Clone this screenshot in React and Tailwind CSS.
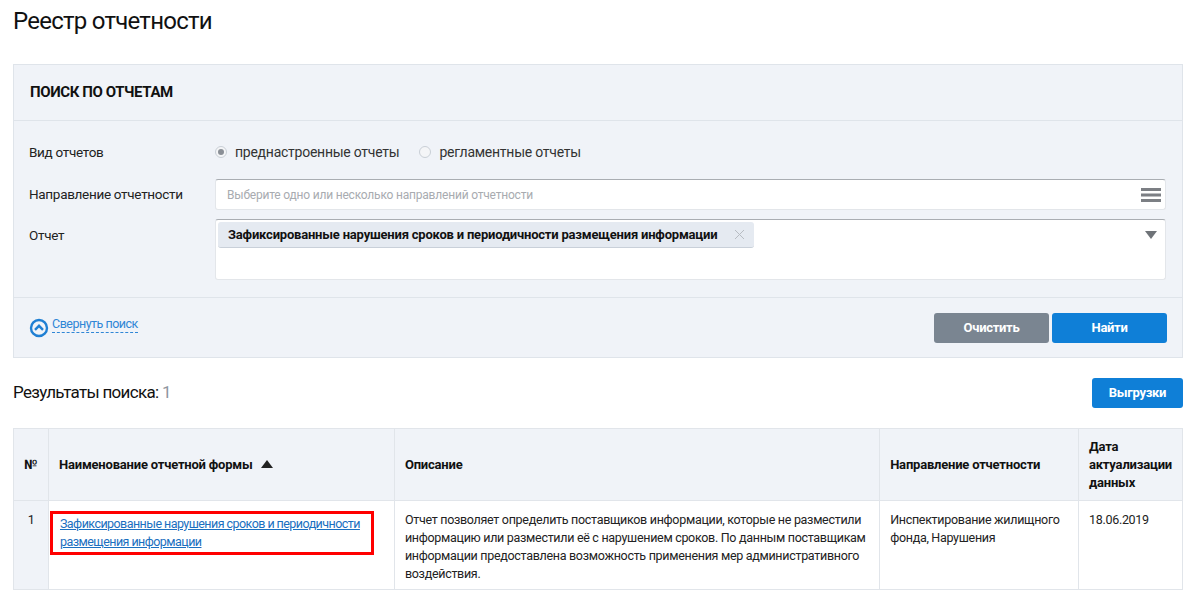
import React from 'react';

const font = { fontFamily: 'Roboto, "Noto Sans", sans-serif' };

const Radio = ({ checked, label }) => (
    <label className="flex items-center gap-[8px] mr-[20px]">
        <span className="w-[12px] h-[12px] rounded-full border border-[#c9cfd6] bg-[#f4f5f7] flex items-center justify-center">
            {checked && <span className="w-[6px] h-[6px] rounded-full bg-[#8a8f96]" />}
        </span>
        <span className="text-[14px] text-[#333] tracking-[-0.25px]">{label}</span>
    </label>
);

const App = () => {
    return (
        <div className="w-[1192px] h-[601px] bg-white overflow-hidden text-[#222]" style={font}>
            <div className="ml-[13px] w-[1170px] pt-[7px]">
                {/* Title */}
                <h1 className="text-[24px] leading-[28px] text-[#111] tracking-[-0.75px]">Реестр отчетности</h1>

                {/* Search panel */}
                <div className="mt-[29px] bg-[#f0f3f8] border border-[#dfe4ea]">
                    <div className="h-[56px] flex items-center px-[16px] border-b border-[#dfe4ea]">
                        <span className="text-[15px] font-bold text-[#111] tracking-[-0.4px]">ПОИСК ПО ОТЧЕТАМ</span>
                    </div>

                    <div className="pl-[15px] pr-[16px] pt-[21px] pb-[17px]">
                        <div className="flex items-center h-[20px]">
                            <span className="w-[186px] text-[13.5px] text-[#222] tracking-[-0.3px]">Вид отчетов</span>
                            <Radio checked label="преднастроенные отчеты" />
                            <Radio label="регламентные отчеты" />
                        </div>

                        <div className="flex items-center mt-[17px]">
                            <span className="w-[186px] text-[13.5px] text-[#222] tracking-[-0.3px]">Направление отчетности</span>
                            <div className="flex-1 h-[31px] bg-white rounded-[3px] border border-[#e3e6ea] border-t-[#a9adb2] flex items-center pl-[11px] pr-[4px]">
                                <span className="flex-1 text-[12px] text-[#a8abb0] tracking-[-0.2px]">Выберите одно или несколько направлений отчетности</span>
                                <svg width="20" height="16" viewBox="0 0 20 16">
                                    <rect x="0" y="1" width="20" height="3" fill="#7c7f84" />
                                    <rect x="0" y="6.5" width="20" height="3" fill="#7c7f84" />
                                    <rect x="0" y="12" width="20" height="3" fill="#7c7f84" />
                                </svg>
                            </div>
                        </div>

                        <div className="flex items-start mt-[9px]">
                            <span className="w-[186px] text-[13.5px] text-[#222] tracking-[-0.3px] pt-[6px]">Отчет</span>
                            <div className="flex-1 h-[61px] bg-white rounded-[3px] border border-[#e3e6ea] border-t-[#a9adb2] flex items-start pl-[2px] pr-[8px] pt-[2px]">
                                <div className="flex-1">
                                    <span className="inline-flex items-center h-[26px] bg-[#e5eaf1] border-b border-[#c9d0d9] rounded-[3px] pl-[10px] pr-[9px]">
                                        <span className="text-[13px] font-bold text-[#111] tracking-[-0.2px]">Зафиксированные нарушения сроков и периодичности размещения информации</span>
                                        <svg className="ml-[17px]" width="11" height="11" viewBox="0 0 11 11">
                                            <path d="M1 1L10 10M10 1L1 10" stroke="#b7bcc2" strokeWidth="1" />
                                        </svg>
                                    </span>
                                </div>
                                <svg className="mt-[9px]" width="12" height="9" viewBox="0 0 12 9">
                                    <path d="M0 0H12L6 8Z" fill="#6f7378" />
                                </svg>
                            </div>
                        </div>
                    </div>

                    <div className="border-t border-[#dfe4ea] h-[60px] flex items-center px-[15px]">
                        <a className="flex items-center gap-[3px] text-[12.5px] text-[#2f86d6] tracking-[-0.5px]">
                            <svg width="20" height="20" viewBox="0 0 20 20">
                                <circle cx="10" cy="10" r="8" fill="none" stroke="#1f7fd3" strokeWidth="2.4" />
                                <path d="M6 11.8L10 7.8L14 11.8" fill="none" stroke="#1f7fd3" strokeWidth="2.4" />
                            </svg>
                            <span className="border-b border-dashed border-[#2f86d6] leading-[15px] pb-[1px] -mt-[6px]">Свернуть поиск</span>
                        </a>
                        <div className="flex-1" />
                        <button className="w-[115px] h-[30px] rounded-[3px] bg-[#7a8591] text-white text-[13px] font-bold tracking-[-0.3px]">Очистить</button>
                        <button className="ml-[3px] w-[115px] h-[30px] rounded-[3px] bg-[#0f7fd7] text-white text-[13px] font-bold tracking-[-0.3px]">Найти</button>
                    </div>
                </div>

                {/* Results header */}
                <div className="flex items-center justify-between mt-[20px] h-[30px]">
                    <span className="text-[17px] text-[#111] tracking-[-0.7px]">Результаты поиска: <span className="text-[#8e96a0]">1</span></span>
                    <button className="w-[91px] h-[30px] rounded-[3px] bg-[#0f7fd7] text-white text-[13px] font-bold tracking-[-0.3px]">Выгрузки</button>
                </div>

                {/* Table */}
                <table className="mt-[20px] w-[1170px] border-collapse text-[13px] tracking-[-0.2px]">
                    <thead>
                        <tr className="bg-[#f0f3f8] h-[72px] text-left">
                            <th className="w-[35px] border border-[#e1e5ea] px-[10px] font-bold text-[#111]">№</th>
                            <th className="w-[346px] border border-[#e1e5ea] px-[10px] font-bold text-[#111]">
                                <span className="inline-flex items-center gap-[8px]">
                                    Наименование отчетной формы
                                    <svg width="12" height="9" viewBox="0 0 12 9"><path d="M0 8H12L6 0Z" fill="#222" /></svg>
                                </span>
                            </th>
                            <th className="w-[486px] border border-[#e1e5ea] px-[10px] font-bold text-[#111]">Описание</th>
                            <th className="w-[199px] border border-[#e1e5ea] px-[10px] font-bold text-[#111]">Направление отчетности</th>
                            <th className="border border-[#e1e5ea] px-[10px] font-bold text-[#111] leading-[18px]">Дата актуализации данных</th>
                        </tr>
                    </thead>
                    <tbody>
                        <tr className="h-[89px] align-top leading-[18px] text-[#222] text-[12.5px] tracking-[-0.3px]">
                            <td className="bg-[#f0f3f8] border border-[#e1e5ea] px-[10px] pt-[10px] text-center">1</td>
                            <td className="border border-[#e1e5ea] pl-[1px] pt-[10px]">
                                <div className="border-[3px] border-[#ff0000] w-[324px] pl-[7px] pr-[2px] py-[1px]">
                                    <a className="text-[#1a6fc0] underline tracking-[-0.55px]">Зафиксированные нарушения сроков и периодичности размещения информации </a>
                                </div>
                            </td>
                            <td className="border border-[#e1e5ea] px-[10px] pt-[10px]">
                                Отчет позволяет определить поставщиков информации, которые не разместили информацию или разместили её с нарушением сроков. По данным поставщикам информации предоставлена возможность применения мер административного воздействия.
                            </td>
                            <td className="border border-[#e1e5ea] px-[10px] pt-[10px]">Инспектирование жилищного фонда, Нарушения</td>
                            <td className="border border-[#e1e5ea] px-[10px] pt-[10px]">18.06.2019</td>
                        </tr>
                    </tbody>
                </table>
            </div>
        </div>
    );
};

export default App;
